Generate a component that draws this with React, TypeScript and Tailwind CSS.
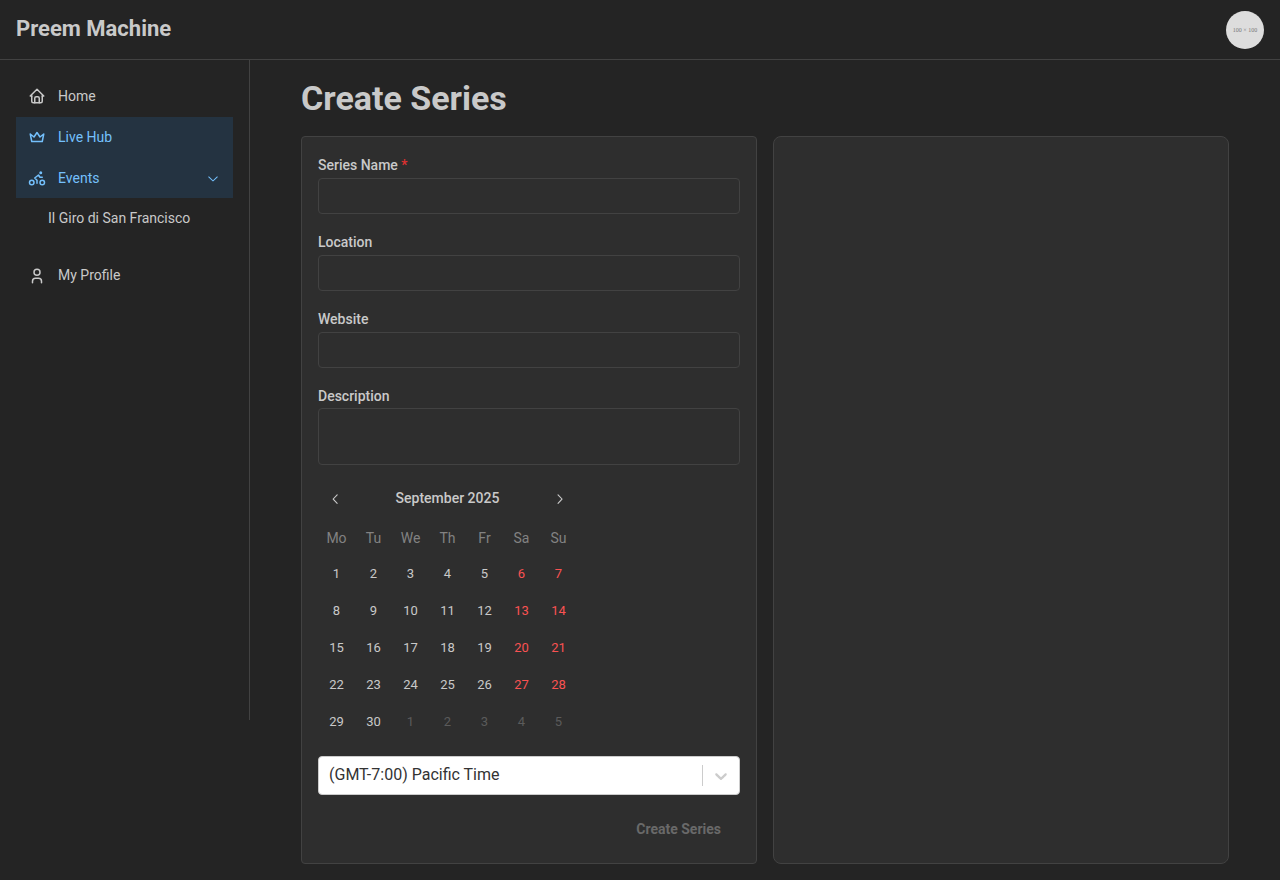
import type { ReactNode } from "react";
import { TbBike, TbCrown, TbHome, TbUser } from "react-icons/tb";

const WEEKDAYS = ["Mo", "Tu", "We", "Th", "Fr", "Sa", "Su"];
const DAYS = Array.from({ length: 35 }, (_, i) => ({
  day: i < 30 ? i + 1 : i - 29,
  outside: i >= 30,
  weekend: i % 7 >= 5,
}));

function Chevron({ className }: { className: string }) {
  return (
    <svg viewBox="0 0 15 15" fill="none" className={className}>
      <path
        d="M3.13523 6.15803C3.3241 5.95657 3.64052 5.94637 3.84197 6.13523L7.5 9.56464L11.158 6.13523C11.3595 5.94637 11.6759 5.95657 11.8648 6.15803C12.0536 6.35949 12.0434 6.67591 11.842 6.86477L7.84197 10.6148C7.64964 10.7951 7.35036 10.7951 7.15803 10.6148L3.15803 6.86477C2.95657 6.67591 2.94637 6.35949 3.13523 6.15803Z"
        fill="currentColor"
        fillRule="evenodd"
        clipRule="evenodd"
      />
    </svg>
  );
}

function NavItem({ icon, label, active, expandable }: { icon: ReactNode; label: string; active?: boolean; expandable?: boolean }) {
  return (
    <a className={`flex h-[40.7px] items-center px-3 ${active ? "bg-[#243341] text-[#74c0fc]" : ""}`}>
      <span className="mr-3 flex w-[18px]">{icon}</span>
      <span className="flex-1">{label}</span>
      {expandable && <Chevron className="size-4" />}
    </a>
  );
}

function Field({ label, required, multiline }: { label: string; required?: boolean; multiline?: boolean }) {
  return (
    <label className="flex flex-col">
      <span className={`font-medium leading-[24px] ${multiline ? "h-6" : "h-[25px]"}`}>
        {label}
        {required && <span className="text-[#e03131]"> *</span>}
      </span>
      {multiline ? (
        <textarea className="h-[57px] resize-none rounded border border-[#424242] bg-[#2e2e2e]" />
      ) : (
        <input className="h-9 rounded border border-[#424242] bg-[#2e2e2e] px-3" />
      )}
    </label>
  );
}

function Calendar() {
  return (
    <div className="mt-[15px] w-[259px]">
      <div className="flex h-9 items-center justify-between">
        <button className="flex size-9 items-center justify-center">
          <Chevron className="mt-0.5 size-[16.2px] rotate-90" />
        </button>
        <span className="font-medium">September 2025</span>
        <button className="flex size-9 items-center justify-center">
          <Chevron className="mt-0.5 size-[16.2px] -rotate-90" />
        </button>
      </div>
      <div className="mt-1.5 grid grid-cols-7 text-center">
        {WEEKDAYS.map((d) => (
          <span key={d} className="h-[32px] leading-[32px] text-[#828282]">{d}</span>
        ))}
      </div>
      <div className="mt-px grid grid-cols-7 text-center text-[13px]">
        {DAYS.map(({ day, outside, weekend }, i) => (
          <span
            key={i}
            className={`h-[37px] leading-[38px] ${outside ? "text-[#5b5b5b]" : weekend ? "text-[#fa5252]" : ""}`}
          >
            {day}
          </span>
        ))}
      </div>
    </div>
  );
}

export default function App() {
  return (
    <div className="flex h-[880px] flex-col bg-[#242424] font-[Roboto,sans-serif] text-sm text-[#c9c9c9]">
      <header className="flex h-[60px] shrink-0 items-center justify-between border-b border-[#424242] px-4">
        <span className="pb-px text-[22px] font-bold leading-[30px]">Preem Machine</span>
        <div className="flex size-[38px] items-center justify-center whitespace-nowrap rounded-full bg-[#dddddd] pt-px font-['Liberation_Serif',serif] text-[6px] text-[#777777]">
          100 × 100
        </div>
      </header>
      <div className="flex flex-1">
        <nav className="h-[660px] w-[250px] shrink-0 border-r border-[#424242] p-4">
          <NavItem icon={<TbHome size={18} strokeWidth={2} />} label="Home" />
          <NavItem icon={<TbCrown size={18} strokeWidth={2} />} label="Live Hub" active />
          <NavItem icon={<TbBike size={18} strokeWidth={2} />} label="Events" active expandable />
          <a className="flex h-[40.7px] items-center pl-8">Il Giro di San Francisco</a>
          <div className="mt-4">
            <NavItem icon={<TbUser size={18} strokeWidth={2} className="mt-px" />} label="My Profile" />
          </div>
        </nav>
        <main className="flex-1 pl-[51px] pr-[51px] pt-4">
          <h1 className="h-[60px] text-[34px] font-bold leading-[45px]">Create Series</h1>
          <div className="grid h-[728px] grid-cols-2 gap-4">
            <section className="rounded border border-[#424242] bg-[#2e2e2e] px-4 pt-4">
              <div className="flex flex-col gap-4">
                <Field label="Series Name" required />
                <Field label="Location" />
                <Field label="Website" />
                <Field label="Description" multiline />
              </div>
              <Calendar />
              <div className="mt-4 flex h-[39px] items-center rounded border border-[#cccccc] bg-white text-base text-[#333333]">
                <span className="flex-1 pb-0.5 pl-2.5">(GMT-7:00) Pacific Time</span>
                <span className="h-[21px] w-px bg-[#cccccc]" />
                <span className="flex w-9 justify-center text-[#cccccc]">
                  <svg width="20" height="20" viewBox="0 0 20 20" fill="currentColor">
                    <path d="M4.516 7.548c0.436-0.446 1.043-0.481 1.576 0l3.908 3.747 3.908-3.747c0.533-0.481 1.141-0.446 1.574 0 0.436 0.445 0.408 1.197 0 1.615-0.406 0.418-4.695 4.502-4.695 4.502-0.217 0.223-0.502 0.335-0.787 0.335s-0.57-0.112-0.789-0.335c0 0-4.287-4.084-4.695-4.502s-0.436-1.17 0-1.615z" />
                  </svg>
                </span>
              </div>
              <div className="mt-4 flex justify-end">
                <button className="h-9 px-[19px] font-bold text-[#696969]">Create Series</button>
              </div>
            </section>
            <section className="rounded-lg border border-[#424242] bg-[#2e2e2e]" />
          </div>
        </main>
      </div>
    </div>
  );
}
